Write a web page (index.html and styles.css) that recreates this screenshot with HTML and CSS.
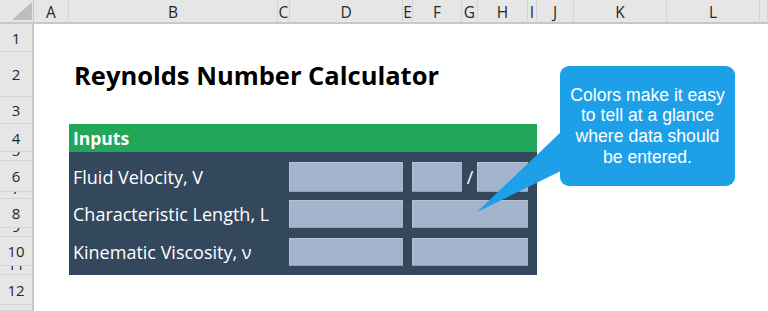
FILE: index.html
```html
<!DOCTYPE html>
<html lang="en">
<head>
  <meta charset="UTF-8" />
  <title>Reynolds Number Calculator</title>
  <link rel="stylesheet" href="styles.css">
</head>
<body>
  <div class="sheet">
    <div class="corner"><span class="corner-tri"></span></div>
    <div class="col-head">A</div>
    <div class="col-head">B</div>
    <div class="col-head">C</div>
    <div class="col-head">D</div>
    <div class="col-head">E</div>
    <div class="col-head">F</div>
    <div class="col-head">G</div>
    <div class="col-head">H</div>
    <div class="col-head">I</div>
    <div class="col-head">J</div>
    <div class="col-head">K</div>
    <div class="col-head">L</div>
    <div class="col-head"></div>

    <div class="row-head r1">1</div>
    <div class="row-head r2">2</div>
    <div class="row-head r3">3</div>
    <div class="row-head r4">4</div>
    <div class="row-head r5 thin">5</div>
    <div class="row-head r6">6</div>
    <div class="row-head r7 thin">7</div>
    <div class="row-head r8">8</div>
    <div class="row-head r9 thin">9</div>
    <div class="row-head r10">10</div>
    <div class="row-head r11 thin">11</div>
    <div class="row-head r12">12</div>
    <div class="row-head r13"></div>

    <div class="title">Reynolds Number Calculator</div>

    <div class="inputs-head">Inputs</div>
    <div class="panel"></div>

    <div class="label r6">Fluid Velocity, V</div>
    <div class="label r8">Characteristic Length, L</div>
    <div class="label r10">Kinematic Viscosity, ν</div>

    <div class="box col-d r6"></div>
    <div class="box col-f r6"></div>
    <div class="slash r6">/</div>
    <div class="box col-h r6"></div>
    <div class="box col-d r8"></div>
    <div class="box col-fh r8"></div>
    <div class="box col-d r10"></div>
    <div class="box col-fh r10"></div>

    <svg class="callout-tail" width="90" height="90" viewBox="0 0 90 90">
      <polygon points="0,82 86,0 86,40" fill="#1ea0e8"/>
    </svg>
    <div class="callout">Colors make it easy to tell at a glance where data should be entered.</div>
  </div>
</body>
</html>
```

FILE: styles.css
```css
:root {
  --head-bg: #e6e6e6;
  --head-line: #d4d4d4;
  --head-text: #262626;
  --green: #21a65a;
  --panel: #33475d;
  --field: #a2b5cc;
  --callout: #1ea0e8;
}

* {
  margin: 0;
  padding: 0;
  box-sizing: border-box;
}

body {
  background: #fff;
  font-family: "Open Sans", "Noto Sans", sans-serif;
  overflow: hidden;
}

.sheet {
  position: relative;
  display: grid;
  grid-template-columns: 34px 35px 209px 12px 113px 10px 49px 16px 50px 9px 37px 93px 93px 8px;
  grid-template-rows: 24px 28px 45px 27px 28px 9px 31px 7px 29px 9px 29px 9px 30px 6px;
  width: 768px;
  height: 311px;
}

.corner {
  grid-column: 1;
  grid-row: 1;
  position: relative;
  background: var(--head-bg);
  border-right: 1px solid #c8c8c8;
  border-bottom: 2px solid #c8c8c8;
}

.corner-tri {
  position: absolute;
  right: 1px;
  bottom: 2px;
  width: 0;
  height: 0;
  border-left: 20px solid transparent;
  border-bottom: 18px solid #bdbdbd;
}

.col-head {
  grid-row: 1;
  background: var(--head-bg);
  border-right: 1px solid var(--head-line);
  border-bottom: 2px solid #c8c8c8;
  color: var(--head-text);
  font-size: 15.5px;
  display: flex;
  align-items: center;
  justify-content: center;
  overflow: hidden;
  padding-top: 1px;
}

.row-head {
  grid-column: 1;
  background: var(--head-bg);
  border-right: 2px solid #c8c8c8;
  border-bottom: 1px solid var(--head-line);
  color: var(--head-text);
  font-size: 15px;
  line-height: 20px;
  display: flex;
  align-items: center;
  justify-content: center;
  overflow: hidden;
}

.row-head.thin {
  align-items: flex-end;
}

.r1 { grid-row: 2; }
.r2 { grid-row: 3; }
.r3 { grid-row: 4; }
.r4 { grid-row: 5; }
.r5 { grid-row: 6; }
.r6 { grid-row: 7; }
.r7 { grid-row: 8; }
.r8 { grid-row: 9; }
.r9 { grid-row: 10; }
.r10 { grid-row: 11; }
.r11 { grid-row: 12; }
.r12 { grid-row: 13; }
.r13 { grid-row: 14; }

.title {
  grid-column: 3 / 12;
  grid-row: 3;
  align-self: end;
  padding: 0 0 5px 5px;
  font-size: 25.5px;
  font-weight: bold;
  color: #000;
  white-space: nowrap;
}

.inputs-head {
  grid-column: 3 / 11;
  grid-row: 5;
  background: var(--green);
  color: #fff;
  font-weight: bold;
  font-size: 17.5px;
  display: flex;
  align-items: center;
  padding: 0 4px;
}

.panel {
  grid-column: 3 / 11;
  grid-row: 6 / 13;
  background: var(--panel);
}

.label {
  grid-column: 3;
  color: #fff;
  font-size: 18px;
  display: flex;
  align-items: center;
  padding-left: 4px;
  white-space: nowrap;
}

.box {
  background: var(--field);
  margin: 1px 0 0 -1px;
  border-left: 1px solid #b3c3d6;
  border-top: 1px solid #b3c3d6;
  border-bottom: 1px dotted #7f8fa5;
}

.col-d { grid-column: 5; }
.col-f { grid-column: 7; }
.col-h { grid-column: 9; }
.col-fh { grid-column: 7 / 10; }

.slash {
  grid-column: 8;
  color: #fff;
  font-size: 18px;
  display: flex;
  align-items: center;
  justify-content: center;
}

.callout-tail {
  position: absolute;
  left: 477px;
  top: 130px;
}

.callout {
  position: absolute;
  left: 560px;
  top: 66px;
  width: 175px;
  height: 120px;
  background: var(--callout);
  border-radius: 9px;
  color: #fff;
  font-family: "Liberation Sans", Arial, sans-serif;
  font-size: 17.6px;
  line-height: 20.6px;
  text-align: center;
  display: flex;
  align-items: center;
  justify-content: center;
  padding: 0 8px;
}
```
